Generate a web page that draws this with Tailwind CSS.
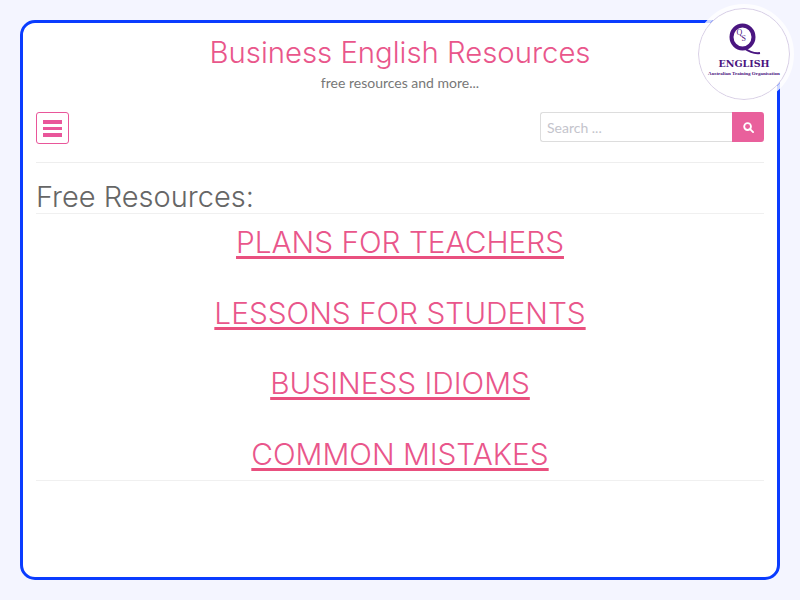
<!DOCTYPE html>
<html lang="en">
<head>
  <meta charset="UTF-8">
  <title>Business English Resources</title>
  <script src="https://cdn.jsdelivr.net/npm/@tailwindcss/browser@4"></script>
</head>
<body class="bg-[#f4f5ff] h-[600px] w-[800px] p-5 overflow-hidden font-['Lato','Noto_Sans',sans-serif]">

  <div class="relative h-[560px] bg-white border-[3px] border-[#0a3cff] rounded-[15px] px-[13px]">

    <!-- logo -->
    <div class="absolute right-[-13px] top-[-15px] w-[92px] h-[92px] rounded-full bg-white border border-[#d9d0e6] outline-[4px] outline-white/80 flex flex-col items-center text-[#4a1580]">
      <div class="relative h-[36px] w-[36px] mt-[13px] ml-[1px]">
        <svg viewBox="0 0 36 36" class="w-[36px] h-[36px]" fill="none">
          <ellipse cx="15.5" cy="15" rx="11" ry="11.5" stroke="#4a1580" stroke-width="4"></ellipse>
          <path d="M17 26 C21 29 26 32 33 31" stroke="#4a1580" stroke-width="2"></path>
        </svg>
        <span class="absolute left-[10px] top-[7px] text-[8px] leading-[8px] font-['Liberation_Serif',serif]">Q</span>
        <span class="absolute left-[15px] top-[13px] text-[8px] leading-[8px] font-['Liberation_Serif',serif]">S</span>
      </div>
      <div class="text-[9.5px] leading-[10px] mt-[1px] font-bold font-['DejaVu_Serif',serif]">ENGLISH</div>
      <div class="text-[5px] leading-[6px] mt-[2px] font-bold whitespace-nowrap font-['Liberation_Serif',serif]">Australian Training Organisation</div>
    </div>

    <!-- header -->
    <div class="text-center pt-[12px]">
      <h1 class="text-[29.3px] leading-[36px] text-[#e9568b] font-['Inter',sans-serif] font-light">Business English Resources</h1>
      <p class="text-[14px] leading-[20px] mt-[2px] text-[#777777]">free resources and more...</p>
    </div>

    <!-- nav -->
    <div class="flex items-start justify-between mt-[19px] pb-[18px] border-b border-[#eeeeee]">
      <button class="w-[33px] h-[32px] border border-[#e9569a] rounded-[3px] flex flex-col items-center justify-center gap-[3px]">
        <span class="block w-[19px] h-[4px] bg-[#e9569a]"></span>
        <span class="block w-[19px] h-[3px] bg-[#e9569a]"></span>
        <span class="block w-[19px] h-[4px] bg-[#e9569a]"></span>
      </button>
      <div class="flex h-[30px] w-[224px]">
        <input type="text" placeholder="Search ..." class="w-[192px] h-full border border-[#dddddd] border-r-0 rounded-l-[3px] px-[6px] text-[14px] placeholder:text-[#c4c4cc] outline-none">
        <div class="w-[32px] h-full bg-[#e9609c] rounded-r-[3px] flex items-center justify-center">
          <svg viewBox="0 0 12 12" class="w-[11px] h-[11px]" fill="none" stroke="white" stroke-width="2">
            <circle cx="5" cy="5" r="3.7"></circle>
            <path d="M8 8 L11 11" stroke-linecap="round"></path>
          </svg>
        </div>
      </div>
    </div>

    <!-- content -->
    <h2 class="text-[29px] leading-[38px] mt-[15px] text-[#666666] font-['Inter',sans-serif] font-light border-b border-[#f0f0f0] h-[36px]">Free Resources:</h2>
    <div class="flex flex-col items-center pb-[8.5px] border-b border-[#f0f0f0] text-[29.8px] leading-[36px] font-['Inter',sans-serif] font-light text-[#e9568b]">
      <a href="#" class="mt-[10px] underline decoration-[3px] decoration-[#e9507f] underline-offset-[3px]">PLANS FOR TEACHERS</a>
      <a href="#" class="mt-[34.5px] underline decoration-[3px] decoration-[#e9507f] underline-offset-[3px]">LESSONS FOR STUDENTS</a>
      <a href="#" class="mt-[34.5px] underline decoration-[3px] decoration-[#e9507f] underline-offset-[3px]">BUSINESS IDIOMS</a>
      <a href="#" class="mt-[34.5px] underline decoration-[3px] decoration-[#e9507f] underline-offset-[3px]">COMMON MISTAKES</a>
    </div>
  </div>

</body>
</html>
